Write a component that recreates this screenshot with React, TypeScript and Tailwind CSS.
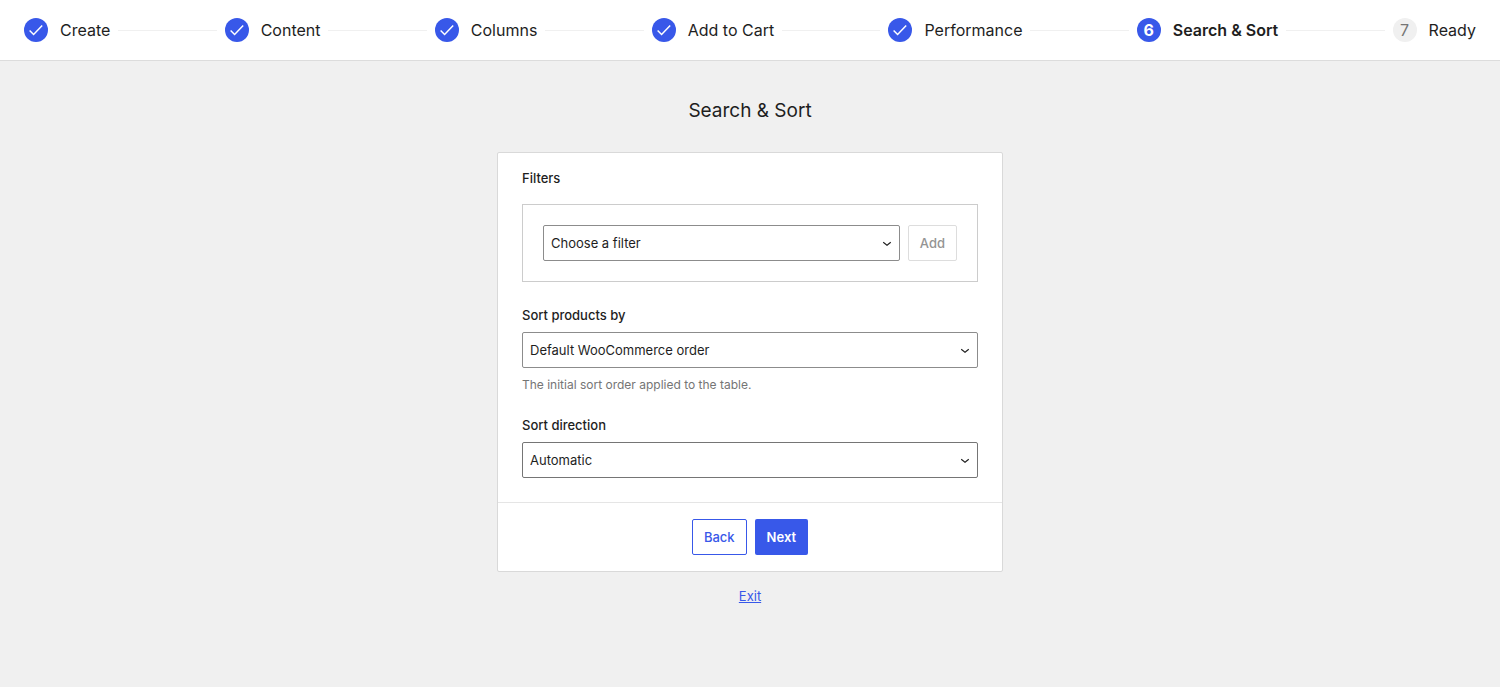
import { Fragment, useState } from "react";
import type { ReactNode, SelectHTMLAttributes } from "react";

const STEPS = ["Create", "Content", "Columns", "Add to Cart", "Performance", "Search & Sort", "Ready"];
const CURRENT = 5;

function CheckIcon() {
  return (
    <svg viewBox="0 0 24 24" className="size-6" fill="none" stroke="#fff" strokeWidth="1.5" aria-hidden="true">
      <path d="M5.6 12.5l4 4L18.2 7.5" />
    </svg>
  );
}

function Badge({ index }: { index: number }) {
  if (index < CURRENT) {
    return (
      <span className="flex size-6 items-center justify-center rounded-full bg-[#3858e9]">
        <CheckIcon />
      </span>
    );
  }
  if (index === CURRENT) {
    return (
      <span className="flex size-6 items-center justify-center rounded-full bg-[#3858e9] font-bold text-white">
        {index + 1}
      </span>
    );
  }
  return (
    <span className="flex size-6 items-center justify-center rounded-full bg-[#f0f0f0] text-[#757575]">
      {index + 1}
    </span>
  );
}

function Stepper() {
  return (
    <header className="border-b border-[#dcdcdc] bg-white px-6">
      <ol className="flex h-15 items-center text-base">
        {STEPS.map((step, i) => (
          <Fragment key={step}>
            {i > 0 && <li aria-hidden="true" className="mx-2 h-px flex-1 bg-[#f0f0f0]" />}
            <li
              className="flex items-center gap-3 whitespace-nowrap"
              aria-current={i === CURRENT ? "step" : undefined}
            >
              <Badge index={i} />
              <span className={i === CURRENT ? "font-semibold" : ""}>{step}</span>
            </li>
          </Fragment>
        ))}
      </ol>
    </header>
  );
}

type SelectProps = SelectHTMLAttributes<HTMLSelectElement> & { tone: string; children: ReactNode };

function Select({ tone, children, ...rest }: SelectProps) {
  return (
    <div className="relative flex-1">
      <select
        {...rest}
        className={`block h-9 w-full appearance-none rounded-xs border bg-white pt-0.5 pr-7 pl-[7px] text-[13px] ${tone}`}
      >
        {children}
      </select>
      <svg
        viewBox="0 0 24 24"
        className="pointer-events-none absolute top-[9px] right-1 size-[18px]"
        fill="currentColor"
        aria-hidden="true"
      >
        <path d="M17.5 11.6L12 16l-5.5-4.4.9-1.2L12 14l4.5-3.6 1 1.2z" />
      </svg>
    </div>
  );
}

export default function App() {
  const [filter, setFilter] = useState("");

  return (
    <div className="min-h-screen bg-[#f0f0f0] font-['Inter','Liberation_Sans',sans-serif] text-[13px] text-[#1e1e1e]">
      <Stepper />
      <main className="mx-auto flex max-w-[506px] flex-col pt-9 pb-6">
        <h1 className="text-center text-[19px] leading-7">Search &amp; Sort</h1>
        <form
          className="mt-[27px] rounded-xs border border-[#d9d9d9] bg-white"
          onSubmit={(e) => e.preventDefault()}
        >
          <div className="px-6 pt-4 pb-6">
            <label htmlFor="filter" className="block leading-[18px] font-medium">
              Filters
            </label>
            <div className="mt-[17px] flex gap-2 border border-[#cccccc] p-5">
              <Select
                id="filter"
                tone="border-[#8c8c8c]"
                value={filter}
                onChange={(e) => setFilter(e.target.value)}
              >
                <option value="">Choose a filter</option>
                <option value="categories">Categories</option>
                <option value="tags">Tags</option>
              </Select>
              <button
                type="button"
                disabled={!filter}
                className="h-9 rounded-xs border border-[#3858e9] px-[11px] pt-0.5 font-medium text-[#3858e9] disabled:border-[#dddddd] disabled:text-[#949494]"
              >
                Add
              </button>
            </div>

            <label htmlFor="sort-by" className="mt-6 mb-2 block leading-[18px] font-medium">
              Sort products by
            </label>
            <Select id="sort-by" tone="border-[#8c8c8c]" aria-describedby="sort-by-help">
              <option>Default WooCommerce order</option>
              <option>Name</option>
              <option>Price</option>
            </Select>
            <p id="sort-by-help" className="mt-2 text-xs leading-[18px] text-[#757575]">
              The initial sort order applied to the table.
            </p>

            <label htmlFor="sort-direction" className="mt-[22px] mb-2 block leading-[18px] font-medium">
              Sort direction
            </label>
            <Select id="sort-direction" tone="border-[#757575]">
              <option>Automatic</option>
              <option>Ascending</option>
              <option>Descending</option>
            </Select>
          </div>
          <div className="flex justify-center gap-2 border-t border-[#e5e5e5] p-4">
            <button
              type="button"
              className="h-9 rounded-xs border border-[#3858e9] px-[11px] pt-0.5 font-medium text-[#3858e9]"
            >
              Back
            </button>
            <button type="submit" className="h-9 rounded-xs bg-[#3858e9] px-3 pt-0.5 font-semibold text-white">
              Next
            </button>
          </div>
        </form>
        <a href="#exit" className="mt-4 self-center leading-4 text-[#3858e9] underline">
          Exit
        </a>
      </main>
    </div>
  );
}
